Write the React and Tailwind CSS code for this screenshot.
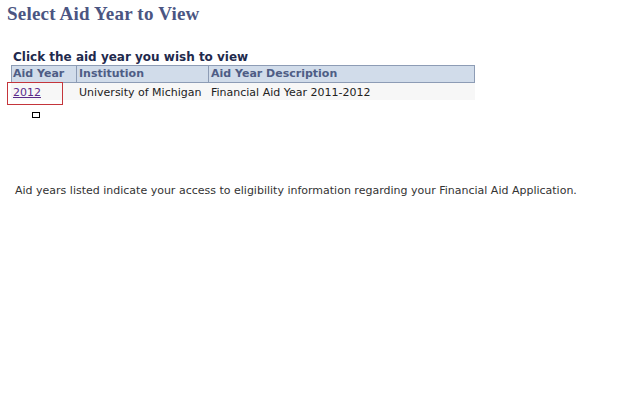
export default function App() {
  const v = { fontFamily: '"DejaVu Sans", Verdana, sans-serif' };
  return (
    <div className="w-[640px] h-[400px] bg-white relative overflow-hidden" style={v}>
      <h1
        className="absolute left-[7px] top-[3px] text-[19px] font-bold text-[#4b5582] leading-[22px]"
        style={{ fontFamily: '"Liberation Serif", serif', letterSpacing: '0.2px' }}
      >
        Select Aid Year to View
      </h1>
      <div className="pt-[50px] pl-[11px]">
        <div className="text-[12px] font-bold text-[#1f2a4d] leading-[15px] pl-[2px]">
          Click the aid year you wish to view
        </div>
        <div className="w-[464px] text-[11px]">
          <div className="flex h-[18px] bg-[#d1dcea] border border-[#8d9cb5] text-[#4e5d85] font-bold leading-[16px]">
            <div className="w-[65px] pl-[1px] border-r border-[#8d9cb5]">Aid Year</div>
            <div className="w-[132px] pl-[2px] border-r border-[#8d9cb5]">Institution</div>
            <div className="flex-1 pl-[2px]">Aid Year Description</div>
          </div>
          <div className="flex h-[17px] bg-[#f7f7f7] text-[#222] leading-[19px] relative">
            <div className="w-[66px] pl-[2px]">
              <span className="text-[#5a2a8a] underline">2012</span>
            </div>
            <div className="w-[132px] pl-[2px]">University of Michigan</div>
            <div className="flex-1 pl-[2px]">Financial Aid Year 2011-2012</div>
            <div className="absolute left-[-4px] top-[-1px] w-[56px] h-[23px] border border-[#c4353b]" />
          </div>
        </div>
        <div className="ml-[21px] mt-[12px] w-[8px] h-[6px] border border-black" />
      </div>
      <div className="absolute left-[15px] top-[184px] text-[11px] text-[#333] leading-[14px]">
        Aid years listed indicate your access to eligibility information regarding your Financial Aid Application.
      </div>
    </div>
  );
}
